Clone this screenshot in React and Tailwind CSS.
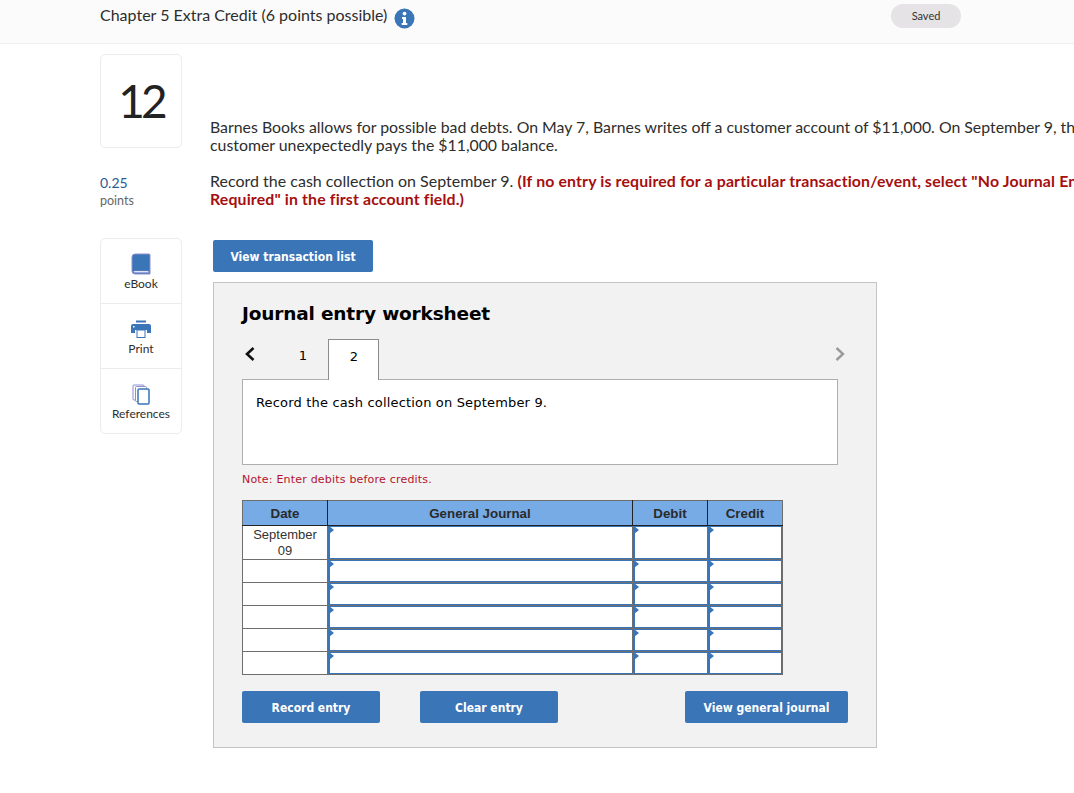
const proxima = "font-['Lato','Open_Sans',sans-serif]";

function Book() {
  return (
    <svg width="20" height="22" viewBox="0 0 20 22">
      <path d="M4 1h14a1 1 0 0 1 1 1v19H4a3 3 0 0 1-3-3V4a3 3 0 0 1 3-3z" fill="#3a75b8" stroke="#8f8fd0" strokeWidth="1" />
      <path d="M3.500 18h14v1.600h-14a.8.8 0 0 1 0-1.600z" fill="#fff" stroke="#8f8fd0" strokeWidth=".5" />
    </svg>
  );
}

function Printer() {
  return (
    <svg width="20" height="18" viewBox="0 0 20 18">
      <rect x="5" y="0.5" width="10" height="2" fill="#3a75b8" />
      <path d="M2 4h16a2 2 0 0 1 2 2v7h-4V10H4v3H0V6a2 2 0 0 1 2-2z" fill="#3a75b8" />
      <rect x="2" y="6" width="1.500" height="1.500" fill="#fff" />
      <rect x="6" y="10" width="8" height="7.500" fill="#fff" stroke="#3a75b8" strokeWidth="1" />
    </svg>
  );
}

function Pages() {
  return (
    <svg width="18" height="21" viewBox="0 0 18 21">
      <rect x="1" y="1" width="11" height="15" rx="1" fill="#fff" stroke="#8f8fd0" strokeWidth="1" />
      <rect x="3.500" y="2.500" width="11" height="15" rx="1" fill="#fff" stroke="#8f8fd0" strokeWidth="1" />
      <rect x="6" y="5" width="11" height="15" rx="1" fill="#fff" stroke="#3a75b8" strokeWidth="1.500" />
    </svg>
  );
}

function SideItem({ icon, label, last }) {
  return (
    <div className={`flex flex-col items-center pt-[13px] ${last ? "h-[64px]" : "h-[65px] border-b border-[#ececec]"}`}>
      <div className="h-[24px] flex items-center justify-center">{icon}</div>
      <div className="text-[12px] leading-[14px] mt-[1px] text-[#2d2d2d]">{label}</div>
    </div>
  );
}

function JCell({ w, last }) {
  return (
    <td className={`${w} p-0 border border-[#6e6e6e] h-px align-top`}>
      <div className={`relative h-full min-h-[21px] border-y border-l-2 border-[#3a75b8] bg-white ${last ? "border-r" : "border-r-0"}`}>
        <span className="absolute left-[-1px] top-[-1px] w-0 h-0 border-y-[4px] border-y-transparent border-l-[5px] border-l-[#3a75b8]" />
      </div>
    </td>
  );
}

function Row({ date, h }) {
  return (
    <tr className={h}>
      <td className="w-[85px] p-0 border border-[#6e6e6e] bg-white text-center text-[13px] leading-[16px] text-[#333]">
        {date}
      </td>
      <JCell w="w-[305px]" />
      <JCell w="w-[75px]" />
      <JCell w="w-[75px]" last />
    </tr>
  );
}

function Btn({ className, children }) {
  return (
    <div className={`h-[32px] pt-[1px] rounded-[2px] bg-[#3a75b8] text-white flex items-center justify-center font-bold text-[12px] font-['DejaVu_Sans_Condensed','DejaVu_Sans',sans-serif] ${className}`}>
      {children}
    </div>
  );
}

export default function App() {
  return (
    <div className={`w-[1074px] h-[793px] overflow-hidden bg-white ${proxima} text-[#2d2d2d]`}>
      <header className="h-[44px] bg-[#fbfbfb] border-b border-[#efefef] flex pl-[100px]">
        <div className="flex items-start w-[791px]">
          <span className="text-[16px] leading-[20px] mt-[5px]">Chapter 5 Extra Credit (6 points possible)</span>
          <svg className="ml-[7px] mt-[8px]" width="21" height="21" viewBox="0 0 21 21">
            <circle cx="10.500" cy="10.500" r="10" fill="#3a75b8" />
            <circle cx="10.500" cy="5.600" r="1.900" fill="#fff" />
            <path d="M8 9h4v6h1.300v2H7.700v-2H9v-4H8z" fill="#fff" />
          </svg>
        </div>
        <div className="mt-[4px] w-[70px] h-[24px] rounded-full bg-[#e5e3e6] flex items-center justify-center text-[11px] text-[#333]">
          Saved
        </div>
      </header>

      <main className="flex pl-[100px]">
        <aside className="w-[82px] shrink-0 pt-[10px]">
          <div className="h-[94px] border border-[#ececec] rounded-[5px] flex items-center justify-center text-[46px] leading-none tracking-[-4px] text-[#222]">
            12
          </div>
          <div className="mt-[26px] text-[14px] leading-[18px] text-[#2b5a8e]">0.25</div>
          <div className="text-[12.500px] leading-[18px] text-[#666]">points</div>
          <div className="mt-[28px] border border-[#ececec] rounded-[5px]">
            <SideItem icon={<Book />} label="eBook" />
            <SideItem icon={<Printer />} label="Print" />
            <SideItem icon={<Pages />} label="References" last />
          </div>
        </aside>

        <section className="ml-[28px] w-[905px] shrink-0 pt-[74px]">
          <p className="text-[15.850px] leading-[18px]">
            Barnes Books allows for possible bad debts. On May 7, Barnes writes off a customer account of $11,000. On September 9, the customer unexpectedly pays the $11,000 balance.
          </p>
          <p className="mt-[18px] text-[16px] leading-[18px]">
            Record the cash collection on September 9.{" "}
            <b className="text-[#a50f0f] text-[15.850px] tracking-[0.15px]">
              (If no entry is required for a particular transaction/event, select "No Journal Entry Required" in the first account field.)
            </b>
          </p>

          <Btn className="ml-[3px] mt-[32px] w-[160px]">View transaction list</Btn>

          <div className="ml-[3px] mt-[10px] w-[664px] h-[466px] bg-[#f2f2f2] border border-[#c4c4c4] pl-[28px] font-['DejaVu_Sans',sans-serif]">
            <h2 className="mt-[19px] text-[18.500px] leading-[24px] font-bold text-black tracking-[-0.17px]">Journal entry worksheet</h2>
            <div className="relative w-[596px] h-[40px] mt-[13px] flex text-[13px] text-black">
              <svg className="mt-[7px] ml-[2px]" width="12" height="16" viewBox="0 0 12 16">
                <path d="M9.500 2 3 8l6.500 6" fill="none" stroke="#111" strokeWidth="2.600" />
              </svg>
              <div className="w-[51px] ml-[21px] flex items-center justify-center pb-[6px] pl-[1px]">1</div>
              <div className="w-[51px] h-[41px] relative z-10 bg-white border border-[#8c8c8c] border-b-0 flex items-center justify-center pb-[6px] pl-[1px]">2</div>
              <svg className="absolute right-[-8px] top-[7px]" width="12" height="16" viewBox="0 0 12 16">
                <path d="M2.500 2 9 8l-6.500 6" fill="none" stroke="#9a9a9a" strokeWidth="2.400" />
              </svg>
            </div>
            <div className="w-[596px] h-[86px] bg-white border border-[#aeaeae] px-[13px] pt-[15px] text-[13px] leading-[16px] tracking-[0.17px] text-black">
              Record the cash collection on September 9.
            </div>
            <div className="mt-[8px] text-[11px] leading-[14px] tracking-[0.2px] text-[#b5122e]">Note: Enter debits before credits.</div>

            <table className="mt-[13px] w-[541px] table-fixed border-collapse border border-[#6e6e6e] font-['Liberation_Sans',sans-serif]">
              <thead>
                <tr className="h-[25px] bg-[#76abe6] text-[13.33px] font-bold text-[#2a2a2a]">
                  <th className="w-[85px] p-0 pt-[1px] font-bold border-r border-b border-[#222]">Date</th>
                  <th className="w-[305px] p-0 pt-[1px] font-bold border-r border-b border-[#222]">General Journal</th>
                  <th className="w-[75px] p-0 pt-[1px] font-bold border-r border-b border-[#222]">Debit</th>
                  <th className="w-[75px] p-0 pt-[1px] font-bold border-b border-b-[#222]">Credit</th>
                </tr>
              </thead>
              <tbody>
                <Row date={<>September<br />09</>} h="h-[34px]" />
                <Row h="h-[23px]" />
                <Row h="h-[23px]" />
                <Row h="h-[23px]" />
                <Row h="h-[23px]" />
                <Row h="h-[23px]" />
              </tbody>
            </table>

            <div className="mt-[16px] w-[606px] flex">
              <Btn className="w-[138px]">Record entry</Btn>
              <Btn className="w-[138px] ml-[40px]">Clear entry</Btn>
              <Btn className="w-[163px] ml-auto">View general journal</Btn>
            </div>
          </div>
        </section>
      </main>
    </div>
  );
}
